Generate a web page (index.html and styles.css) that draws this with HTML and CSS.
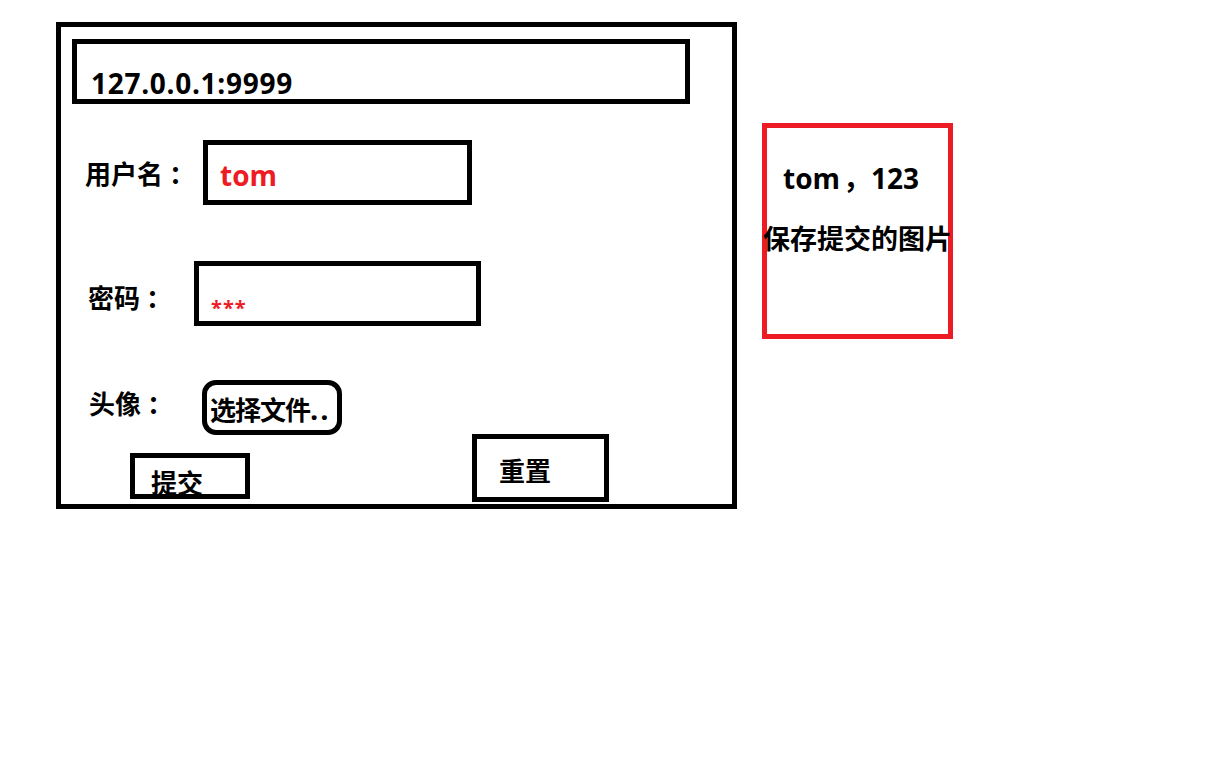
FILE: index.html
```html
<!DOCTYPE html>
<html lang="zh-CN">
<head>
<meta charset="utf-8">
<title>上传表单草图</title>
<link rel="stylesheet" href="styles.css">
</head>
<body>
<div class="canvas">
  <div class="frame">
    <div class="url"><span class="url-text">127.0.0.1:9999</span></div>
    <div class="row row-user">
      <span class="label label-user">用户名<span class="punct colon">：</span></span>
      <div class="field field-user"><span class="value-user">tom</span></div>
    </div>
    <div class="row row-pass">
      <span class="label label-pass">密码<span class="punct colon">：</span></span>
      <div class="field field-pass"><span class="value-pass">***</span></div>
    </div>
    <div class="row row-file">
      <span class="label label-file">头像<span class="punct colon">：</span></span>
      <div class="file-btn"><span class="file-text">选择文件<span class="dots">..</span></span></div>
    </div>
    <div class="row row-actions">
      <div class="btn btn-submit">提交</div>
      <div class="btn btn-reset">重置</div>
    </div>
  </div>
  <div class="result">
    <div class="result-line1">tom<span class="punct comma">，</span>123</div>
    <div class="result-line2">保存提交的图片</div>
  </div>
</div>
</body>
</html>
```
FILE: styles.css
```css
html, body {
  margin: 0;
  padding: 0;
  background: #ffffff;
}
body {
  font-family: "Open Sans", "Noto Sans CJK SC", sans-serif;
  font-weight: 700;
  color: #000000;
}
* { box-sizing: border-box; }

.canvas {
  display: flex;
  align-items: flex-start;
  gap: 25px;
  padding: 22px 0 0 56px;
}

.frame {
  width: 681px;
  height: 487px;
  border: 5px solid #000;
  display: flex;
  flex-direction: column;
}

.punct {
  font-family: "Noto Sans CJK TC", "Noto Sans CJK SC", sans-serif;
}
.colon {
  padding-left: 6px;
}
.comma {
  padding-left: 3px;
}

.url {
  margin: 12px 0 0 11px;
  width: 618px;
  height: 65px;
  border: 5px solid #000;
  padding: 19px 0 0 14px;
  font-size: 28px;
  line-height: 40px;
  letter-spacing: 0.7px;
  white-space: nowrap;
}

.row {
  display: flex;
  align-items: center;
}
.label {
  font-family: "Noto Sans CJK SC", sans-serif;
  font-size: 26px;
  line-height: 30px;
  white-space: nowrap;
}

.field {
  border: 5px solid #000;
  height: 65px;
}

.row-user { margin-top: 36px; padding-left: 24px; }
.label-user { width: 118px; }
.field-user {
  width: 269px;
  display: flex;
  align-items: center;
  padding: 4px 0 0 12px;
}
.value-user {
  color: #ed1c24;
  font-size: 28px;
  line-height: 30px;
}

.row-pass { margin-top: 56px; padding-left: 27px; }
.label-pass { width: 106px; padding-top: 6px; }
.field-pass {
  width: 287px;
  padding: 30px 0 0 12px;
}
.value-pass {
  display: block;
  color: #ed1c24;
  font-size: 20px;
  line-height: 24px;
  letter-spacing: 1px;
}

.row-file { margin-top: 54px; padding-left: 28px; }
.label-file { width: 113px; padding-bottom: 10px; }
.file-btn {
  width: 140px;
  height: 55px;
  border: 5px solid #000;
  border-radius: 14px;
  padding: 9px 0 0 3px;
  white-space: nowrap;
}
.file-text {
  font-family: "Noto Sans CJK SC", sans-serif;
  font-size: 26px;
  line-height: 30px;
  letter-spacing: -1px;
}
.dots {
  font-family: "Open Sans", sans-serif;
  font-size: 29px;
  letter-spacing: 2px;
}

.row-actions {
  margin-top: -1px;
  align-items: flex-start;
  padding-left: 69px;
  gap: 222px;
}
.btn {
  border: 5px solid #000;
  font-family: "Noto Sans CJK SC", sans-serif;
  font-size: 26px;
  line-height: 30px;
  white-space: nowrap;
}
.btn-submit {
  margin-top: 19px;
  width: 120px;
  height: 46px;
  padding: 9px 0 0 16px;
}
.btn-reset {
  width: 137px;
  height: 68px;
  padding: 16px 0 0 22px;
}

.result {
  margin-top: 101px;
  width: 191px;
  height: 216px;
  border: 5px solid #ed1c24;
  display: flex;
  flex-direction: column;
  align-items: center;
  white-space: nowrap;
}
.result-line1 {
  margin-top: 32px;
  padding-right: 13px;
  font-size: 28px;
  line-height: 34px;
}
.result-line2 {
  margin-top: 26px;
  font-family: "Noto Sans CJK SC", sans-serif;
  font-size: 27px;
  line-height: 34px;
}
```
